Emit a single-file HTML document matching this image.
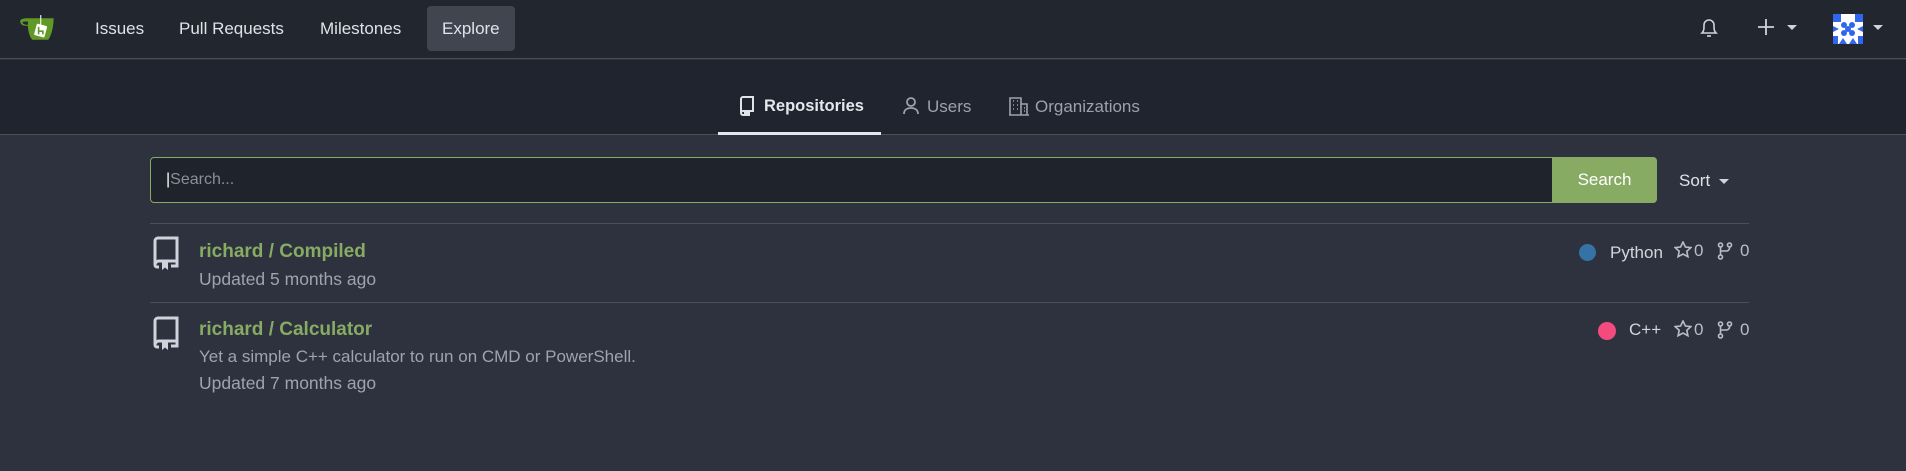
<!DOCTYPE html>
<html><head><meta charset="utf-8"><style>
*{box-sizing:border-box;margin:0;padding:0}
body{width:1906px;height:471px;background:#2e323e;font-family:"Liberation Sans",sans-serif;color:#d2d5dc;position:relative;overflow:hidden}
.a{position:absolute}
.nav{left:0;top:0;width:1906px;height:59px;background:#22262f;border-bottom:1px solid #4b4f58}
.sec{left:0;top:60px;width:1906px;height:75px;background:#20242e;border-bottom:1px solid #4b4f58}
.ni{font-size:17px;color:#dfe2e8;top:19px}
.tab{font-size:17px;top:97px;color:#9ca1ab}
.muted{color:#9ea3ad}
.green{color:#87ab63;font-weight:bold;font-size:19px}
</style></head><body>
<div class="a nav"></div>
<svg class="a" style="left:18px;top:14px" width="38" height="30" viewBox="0 0 33 28"><path d="M8 4h24c0 8-2 16-5 20H12C10 22 8 16 8 11c-3 0-6 0-7-3C0 5 3 4 8 4z" fill="#609926"/><path d="M8 7c-3 0-5 0-5 1 1 2 3 2 5 2z" fill="#22262f"/><line x1="20" y1="1" x2="20" y2="10" stroke="#fff" stroke-width="1"/><rect x="15" y="10" width="10" height="11" rx="1" fill="#fff" transform="rotate(15 20 15)"/><path d="M18 12v7M18 16h4v3" stroke="#609926" stroke-width="1.5" fill="none"/></svg>
<div class="a ni" style="left:95px">Issues</div>
<div class="a ni" style="left:179px">Pull Requests</div>
<div class="a ni" style="left:320px">Milestones</div>
<div class="a" style="left:427px;top:6px;width:88px;height:45px;background:#404550;border-radius:4px"></div>
<div class="a ni" style="left:442px">Explore</div>
<svg class="a" style="left:1698px;top:15px" width="22" height="24" viewBox="0 0 22 24" fill="none" stroke="#cfd3da" stroke-width="1.6"><path d="M4 18c2-2 2-4 2-8a5 5 0 0 1 10 0c0 4 0 6 2 8z"/><path d="M9 21h4"/></svg>
<svg class="a" style="left:1757px;top:18px" width="18" height="18" stroke="#cfd3da" stroke-width="1.8"><path d="M9 1v16M1 9h16"/></svg>
<svg class="a" style="left:1787px;top:25px" width="10" height="6"><path d="M0 0h10L5 5z" fill="#cfd3da"/></svg>
<svg class="a" style="left:1833px;top:14px" width="30" height="30" viewBox="0 0 30 30"><rect width="30" height="30" rx="3" fill="#fff"/><g fill="#3366ee"><rect x="0" y="0" width="8" height="8"/><rect x="22" y="0" width="8" height="8"/><circle cx="11" cy="11" r="3"/><circle cx="19" cy="11" r="3"/><circle cx="15" cy="15" r="3"/><circle cx="11" cy="19" r="3"/><circle cx="19" cy="19" r="3"/><path d="M0 12l6 3-6 3zM30 12l-6 3 6 3zM6 30l4-6 4 6zM16 30l4-6 4 6z"/><rect x="0" y="22" width="5" height="8"/><rect x="25" y="22" width="5" height="8"/></g></svg>
<svg class="a" style="left:1873px;top:25px" width="10" height="6"><path d="M0 0h10L5 5z" fill="#cfd3da"/></svg>

<div class="a sec"></div>
<svg class="a" style="left:739px;top:96px" width="16" height="20" viewBox="0 0 16 20" fill="none" stroke="#e0e3e8" stroke-width="2"><path d="M2 16V3a2 2 0 0 1 2-2h10v14H4a2 2 0 0 0-2 2 2 2 0 0 0 2 2h1"/><path d="M6 15v5l2-1.5 2 1.5v-5z" fill="#e0e3e8"/></svg>
<div class="a tab" style="left:764px;color:#e4e7ec;font-weight:bold;font-size:16.5px">Repositories</div>
<div class="a" style="left:718px;top:132px;width:163px;height:3px;background:#e4e7ec"></div>
<svg class="a" style="left:903px;top:97px" width="16" height="18" viewBox="0 0 16 18" fill="none" stroke="#9ca1ab" stroke-width="1.8"><circle cx="8" cy="5" r="4"/><path d="M1 17c0-4 3-6 7-6s7 2 7 6"/></svg>
<div class="a tab" style="left:927px">Users</div>
<svg class="a" style="left:1009px;top:96px" width="20" height="20" viewBox="0 0 20 20" fill="none" stroke="#9ca1ab" stroke-width="1.6"><path d="M1 19V2h11v17M12 8h6v11M0 19h20"/><path d="M4 5h1M8 5h1M4 9h1M8 9h1M4 13h1M8 13h1M15 12h1M15 15h1"/></svg>
<div class="a tab" style="left:1035px">Organizations</div>

<div class="a" style="left:150px;top:157px;width:1403px;height:46px;background:#1f232c;border:1px solid #87ab63;border-radius:4px 0 0 4px"></div>
<div class="a" style="left:166px;top:171px;font-size:16px;color:#8a8f98"><span style="color:#fff">|</span>Search...</div>
<div class="a" style="left:1552px;top:157px;width:105px;height:46px;background:#87ab63;border-radius:0 4px 4px 0;color:#fff;font-size:17px;text-align:center;line-height:46px">Search</div>
<div class="a" style="left:1679px;top:171px;font-size:17px;color:#dfe2e8">Sort</div>
<svg class="a" style="left:1719px;top:179px" width="10" height="6"><path d="M0 0h10L5 5z" fill="#cfd3da"/></svg>

<div class="a" style="left:150px;top:223px;width:1599px;height:1px;background:#4b4f58"></div>
<div class="a" style="left:150px;top:302px;width:1599px;height:1px;background:#4b4f58"></div>

<svg class="a" style="left:153px;top:236px" width="26" height="34" viewBox="0 0 26 34" fill="none" stroke="#cfd3da" stroke-width="3"><path d="M2 28V5a3 3 0 0 1 3-3h19v23H6a4 4 0 0 0-4 4 2 2 0 0 0 2 2h2"/><path d="M9 25v9l3-2.5 3 2.5v-9z" fill="#cfd3da" stroke="none"/><path d="M18 30h6v-5"/></svg>
<div class="a green" style="left:199px;top:241px">richard / Compiled</div>
<div class="a muted" style="left:199px;top:269px;font-size:17.5px">Updated 5 months ago</div>

<svg class="a" style="left:153px;top:316px" width="26" height="34" viewBox="0 0 26 34" fill="none" stroke="#cfd3da" stroke-width="3"><path d="M2 28V5a3 3 0 0 1 3-3h19v23H6a4 4 0 0 0-4 4 2 2 0 0 0 2 2h2"/><path d="M9 25v9l3-2.5 3 2.5v-9z" fill="#cfd3da" stroke="none"/><path d="M18 30h6v-5"/></svg>
<div class="a green" style="left:199px;top:319px">richard / Calculator</div>
<div class="a muted" style="left:199px;top:347px;font-size:17px">Yet a simple C++ calculator to run on CMD or PowerShell.</div>
<div class="a muted" style="left:199px;top:373px;font-size:17.5px">Updated 7 months ago</div>

<div class="a" style="left:1579px;top:244px;width:17px;height:17px;border-radius:50%;background:#3572a5"></div>
<div class="a" style="left:1610px;top:243px;font-size:17px;color:#d2d5dc">Python</div>
<div class="a" style="left:1598px;top:322px;width:18px;height:18px;border-radius:50%;background:#f34b7d"></div>
<div class="a" style="left:1629px;top:320px;font-size:17px;color:#d2d5dc">C++</div>
<svg class="a" style="left:1674px;top:241px" width="18" height="18" viewBox="0 0 18 18"><path d="M9 1l2.4 5 5.4.6-4 3.7 1.1 5.4L9 13l-4.9 2.7 1.1-5.4-4-3.7 5.4-.6z" fill="none" stroke="#b9bdc5" stroke-width="1.6"/></svg>
<div class="a" style="left:1694px;top:241px;font-size:17px;color:#b9bdc5">0</div>
<svg class="a" style="left:1717px;top:242px" width="16" height="18" viewBox="0 0 16 18" fill="none" stroke="#b9bdc5" stroke-width="1.6"><circle cx="3.5" cy="3" r="2"/><circle cx="12.5" cy="3" r="2"/><circle cx="3.5" cy="15" r="2"/><path d="M3.5 5v8M12.5 5v1a3 3 0 0 1-3 3h-6"/></svg>
<div class="a" style="left:1740px;top:241px;font-size:17px;color:#b9bdc5">0</div>
<svg class="a" style="left:1674px;top:320px" width="18" height="18" viewBox="0 0 18 18"><path d="M9 1l2.4 5 5.4.6-4 3.7 1.1 5.4L9 13l-4.9 2.7 1.1-5.4-4-3.7 5.4-.6z" fill="none" stroke="#b9bdc5" stroke-width="1.6"/></svg>
<div class="a" style="left:1694px;top:320px;font-size:17px;color:#b9bdc5">0</div>
<svg class="a" style="left:1717px;top:321px" width="16" height="18" viewBox="0 0 16 18" fill="none" stroke="#b9bdc5" stroke-width="1.6"><circle cx="3.5" cy="3" r="2"/><circle cx="12.5" cy="3" r="2"/><circle cx="3.5" cy="15" r="2"/><path d="M3.5 5v8M12.5 5v1a3 3 0 0 1-3 3h-6"/></svg>
<div class="a" style="left:1740px;top:320px;font-size:17px;color:#b9bdc5">0</div>
</body></html>
